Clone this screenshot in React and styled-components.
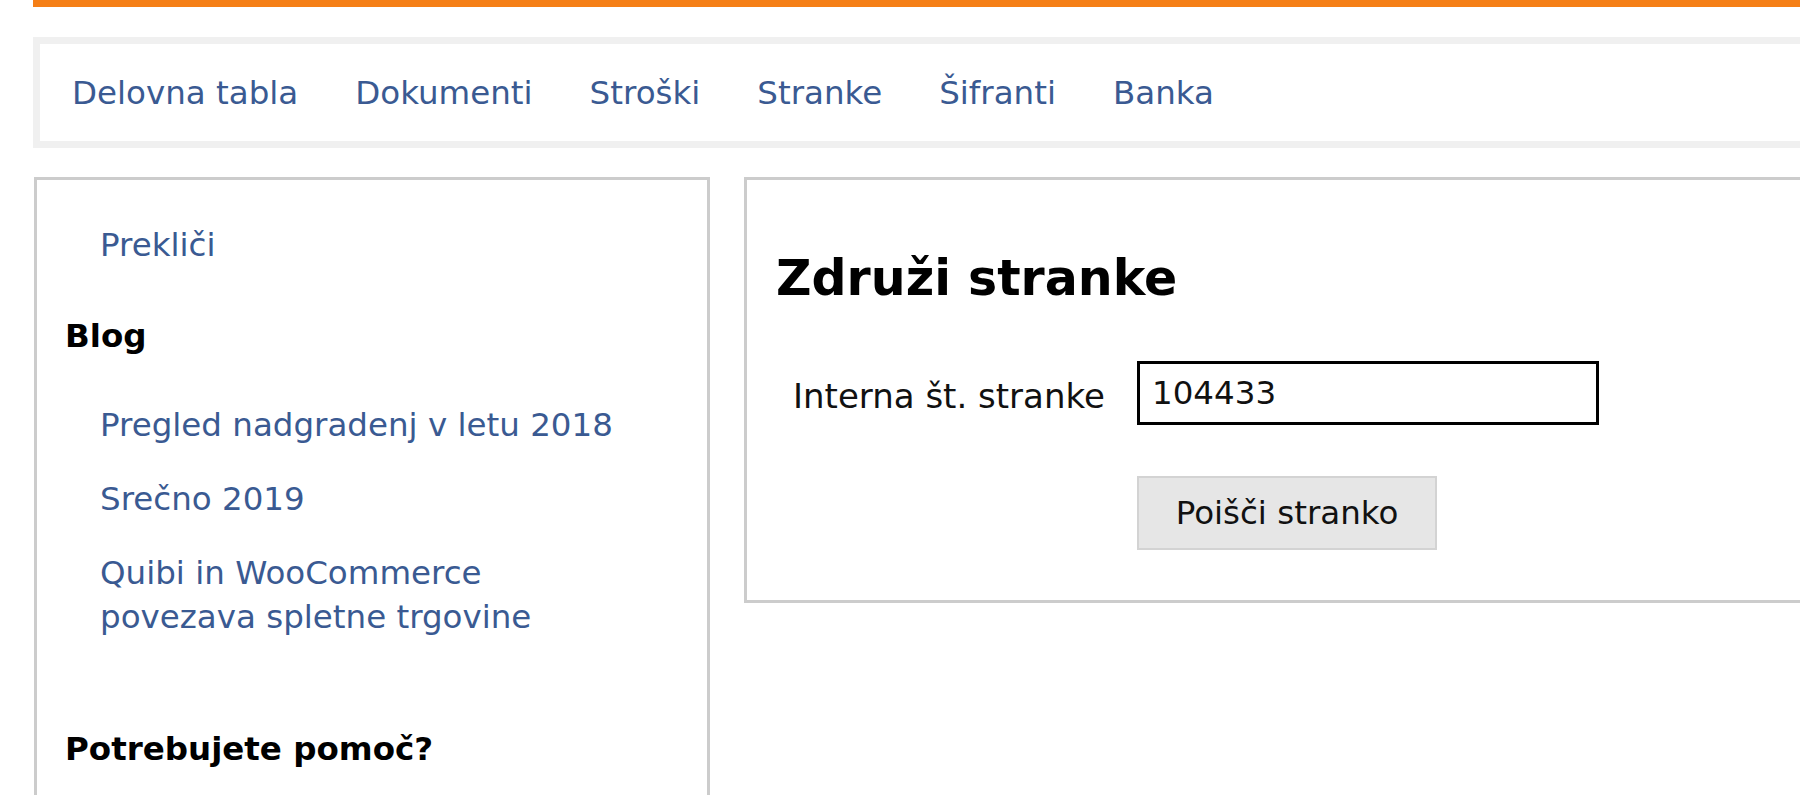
import React from 'react';
import styled, { createGlobalStyle } from 'styled-components';

const GlobalStyle = createGlobalStyle`
  html, body {
    margin: 0;
    padding: 0;
    background: #ffffff;
    overflow: hidden;
  }
  body {
    font-family: "DejaVu Sans", Verdana, sans-serif;
    font-size: 32.5px;
    color: #111;
  }
`;

const Page = styled.div`
  width: 1960px;
  padding-left: 33px;
`;

const TopBar = styled.div`
  height: 7px;
  background-color: #f57f17;
`;

const NavBar = styled.nav`
  box-sizing: border-box;
  height: 111px;
  margin-top: 30px;
  border: 7px solid #f0f0f0;
  background: #fff;
  display: flex;
  align-items: center;
  gap: 57px;
  padding-left: 32px;
`;

const NavLink = styled.a`
  color: #3a5a92;
  text-decoration: none;
  line-height: 44px;
`;

const Columns = styled.div`
  display: flex;
  align-items: flex-start;
  gap: 34px;
  margin-top: 29px;
  padding-left: 1px;
`;

const Sidebar = styled.aside`
  box-sizing: border-box;
  width: 676px;
  min-height: 700px;
  border: 3px solid #cccccc;
  padding: 43px 28px 0 28px;
`;

const LinkList = styled.ul`
  list-style: none;
  margin: 0;
  padding: 0 0 0 35px;

  li + li {
    margin-top: 30px;
  }
`;

const SideLink = styled.a`
  display: block;
  max-width: ${(p) => (p.$narrow ? '470px' : 'none')};
  color: #3a5a92;
  text-decoration: none;
  line-height: 44px;
`;

const SideHeading = styled.h3`
  margin: ${(p) => p.$top}px 0 45px 0;
  font-size: 32.5px;
  font-weight: bold;
  line-height: 44px;
  color: #000;
`;

const Panel = styled.section`
  box-sizing: border-box;
  flex: 1;
  border: 3px solid #cccccc;
  padding: 71px 0 50px 29px;
`;

const Title = styled.h1`
  margin: 0 0 54px 0;
  font-size: 49px;
  line-height: 56px;
  font-weight: bold;
  color: #000;
`;

const Form = styled.form`
  display: grid;
  grid-template-columns: 311px 462px;
  column-gap: 33px;
  row-gap: 51px;
  align-items: center;
  padding-left: 17px;
`;

const Label = styled.label`
  white-space: nowrap;
  font-size: 34px;
  color: #111;
  padding-top: 6px;
`;

const Input = styled.input`
  box-sizing: border-box;
  width: 462px;
  height: 64px;
  border: 3px solid #000;
  padding: 0 12px;
  font-family: inherit;
  font-size: 32.5px;
  color: #111;
  background: #fff;
  outline: none;
`;

const Button = styled.button`
  grid-column: 2;
  justify-self: start;
  box-sizing: border-box;
  width: 300px;
  height: 74px;
  border: 2px solid #d3d3d3;
  background: #e6e6e6;
  font-family: inherit;
  font-size: 32.5px;
  color: #111;
  cursor: pointer;
`;

const navItems = ['Delovna tabla', 'Dokumenti', 'Stroški', 'Stranke', 'Šifranti', 'Banka'];
const blogPosts = [
  'Pregled nadgradenj v letu 2018',
  'Srečno 2019',
  'Quibi in WooCommerce povezava spletne trgovine',
];

const App = () => {
  return (
    <>
      <GlobalStyle />
      <Page>
        <TopBar />
        <NavBar>
          {navItems.map((item) => (
            <NavLink key={item} href="#">{item}</NavLink>
          ))}
        </NavBar>
        <Columns>
          <Sidebar>
            <LinkList>
              <li><SideLink href="#">Prekliči</SideLink></li>
            </LinkList>
            <SideHeading $top={47}>Blog</SideHeading>
            <LinkList>
              {blogPosts.map((post) => (
                <li key={post}>
                  <SideLink href="#" $narrow={post.length > 30}>{post}</SideLink>
                </li>
              ))}
            </LinkList>
            <SideHeading $top={88}>Potrebujete pomoč?</SideHeading>
          </Sidebar>
          <Panel>
            <Title>Združi stranke</Title>
            <Form onSubmit={(e) => e.preventDefault()}>
              <Label htmlFor="interna">Interna št. stranke</Label>
              <Input id="interna" defaultValue="104433" />
              <Button type="submit">Poišči stranko</Button>
            </Form>
          </Panel>
        </Columns>
      </Page>
    </>
  );
};

export default App;
